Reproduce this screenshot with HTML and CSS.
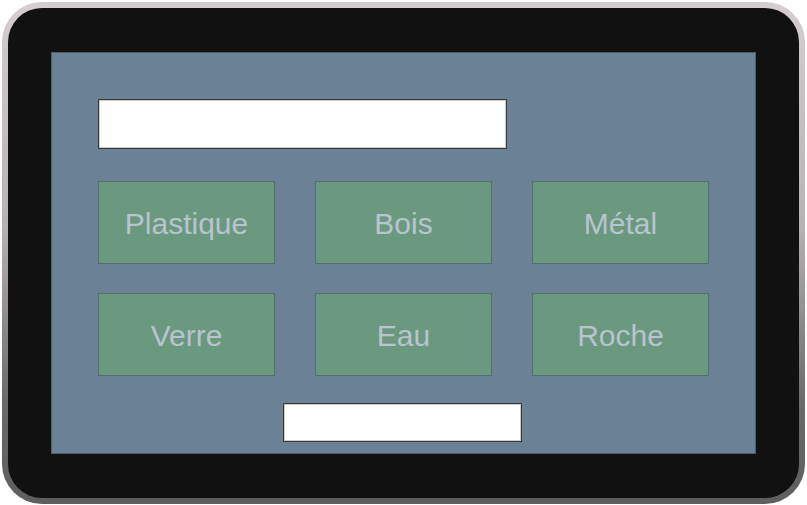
FILE: index.html
```html
<!DOCTYPE html>
<html lang="fr">
<head>
<meta charset="utf-8">
<title>Tablette</title>
<link rel="stylesheet" href="styles.css">
</head>
<body>
<div class="device">
  <div class="screen">
    <div class="field field-top"></div>
    <div class="grid">
      <div class="tile">Plastique</div>
      <div class="tile">Bois</div>
      <div class="tile">Métal</div>
      <div class="tile">Verre</div>
      <div class="tile">Eau</div>
      <div class="tile">Roche</div>
    </div>
    <div class="field field-bottom"></div>
  </div>
</div>
</body>
</html>
```
FILE: styles.css
```css
html, body {
  margin: 0;
  padding: 0;
  background: #ffffff;
}
body {
  width: 807px;
  height: 505px;
  overflow: hidden;
  font-family: "Liberation Sans", Arial, sans-serif;
}
.device {
  box-sizing: border-box;
  margin: 2px 0 0 2px;
  width: 803px;
  height: 502px;
  border: 6px solid transparent;
  border-radius: 40px;
  background:
    linear-gradient(#111111, #111111) padding-box,
    linear-gradient(180deg, #d6cdd0 0%, #b8b0b3 45%, #6a6a6a 80%, #5e5e5e 100%) border-box;
  padding: 44px 0 0 43px;
}
.screen {
  box-sizing: border-box;
  width: 705px;
  height: 402px;
  background: #6b8196;
  border: 1px solid #4d5d6b;
  padding: 46px 46px 0 46px;
  display: flex;
  flex-direction: column;
  align-items: flex-start;
}
.field {
  box-sizing: border-box;
  background: #ffffff;
  border: 1px solid #3a3a3a;
  box-shadow: inset 0 0 0 1px #cfcaca;
}
.field-top {
  width: 409px;
  height: 50px;
}
.grid {
  margin-top: 32px;
  display: grid;
  grid-template-columns: repeat(3, 177px);
  grid-auto-rows: 83px;
  column-gap: 40px;
  row-gap: 29px;
}
.tile {
  box-sizing: border-box;
  background: #6b997f;
  border: 1px solid #52706a;
  color: #b8c4d0;
  font-size: 30px;
  display: flex;
  align-items: center;
  justify-content: center;
  padding-top: 2px;
}
.field-bottom {
  margin: 27px 0 0 185px;
  width: 239px;
  height: 39px;
}
```
